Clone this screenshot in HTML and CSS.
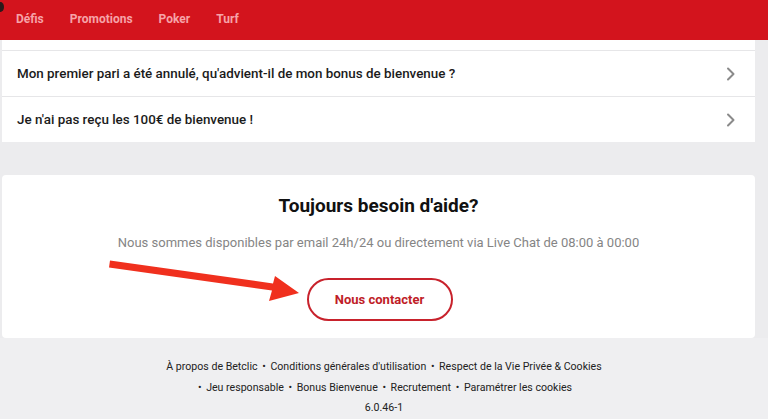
FILE: index.html
```html
<!DOCTYPE html>
<html lang="fr">
<head>
<meta charset="utf-8">
<title>Betclic aide</title>
<link rel="stylesheet" href="styles.css">
</head>
<body>
<header class="topbar">
  <span class="cursor-dot"></span>
  <nav class="nav">
    <a class="nav-item">Défis</a>
    <a class="nav-item">Promotions</a>
    <a class="nav-item">Poker</a>
    <a class="nav-item">Turf</a>
  </nav>
</header>
<main class="content">
  <section class="faq">
    <div class="faq-top"></div>
    <div class="faq-row">
      <span class="faq-text">Mon premier pari a été annulé, qu'advient-il de mon bonus de bienvenue ?</span>
      <svg class="chev" width="10" height="14" viewBox="0 0 10 14"><path d="M2 1.5 L7.5 7 L2 12.5" fill="none" stroke="#8a8a8a" stroke-width="2" stroke-linecap="round" stroke-linejoin="round"/></svg>
    </div>
    <div class="faq-row">
      <span class="faq-text">Je n'ai pas reçu les 100€ de bienvenue !</span>
      <svg class="chev" width="10" height="14" viewBox="0 0 10 14"><path d="M2 1.5 L7.5 7 L2 12.5" fill="none" stroke="#8a8a8a" stroke-width="2" stroke-linecap="round" stroke-linejoin="round"/></svg>
    </div>
  </section>
  <section class="help">
    <h2 class="help-title">Toujours besoin d'aide?</h2>
    <p class="help-sub">Nous sommes disponibles par email 24h/24 ou directement via Live Chat de 08:00 à 00:00</p>
    <div class="help-action">
      <a class="btn-contact">Nous contacter</a>
    </div>
    <svg class="arrow" width="200" height="48" viewBox="0 0 200 48"><path d="M1 7.5 L164 30.5 L161 41 L191 33 L167 16 L165 23.5 L2 0.5 Z" fill="#f0301e"/></svg>
  </section>
</main>
<footer class="footer">
  <p class="foot-line">À propos de Betclic <span class="dot">•</span> Conditions générales d'utilisation <span class="dot">•</span> Respect de la Vie Privée &amp; Cookies</p>
  <p class="foot-line"><span class="dot">•</span> Jeu responsable <span class="dot">•</span> Bonus Bienvenue <span class="dot">•</span> Recrutement <span class="dot">•</span> Paramétrer les cookies</p>
  <p class="foot-line">6.0.46-1</p>
</footer>
</body>
</html>
```
FILE: styles.css
```css
* { box-sizing: border-box; }
html, body { margin: 0; padding: 0; }
body {
  width: 768px;
  height: 419px;
  overflow: hidden;
  background: #ececee;
  font-family: Roboto, "Liberation Sans", Arial, sans-serif;
  color: #1a1a1a;
}
.topbar {
  position: relative;
  height: 40px;
  background: #d3141d;
  display: flex;
  align-items: center;
  padding-left: 16px;
}
.cursor-dot {
  position: absolute;
  left: -3px;
  top: 2px;
  width: 7px;
  height: 10px;
  border-radius: 50%;
  background: #2a1a1a;
}
.nav { display: flex; gap: 26px; padding-bottom: 3px; }
.nav-item {
  color: #f6a3a8;
  font-size: 12px;
  font-weight: 700;
  text-decoration: none;
}
.content { padding: 0 13px 0 2px; }
.faq { background: #fff; }
.faq-top { height: 10px; }
.faq-row {
  height: 46px;
  border-top: 1px solid #e6e6e8;
  display: flex;
  align-items: center;
  justify-content: space-between;
  padding: 0 19px 0 15px;
}
.faq-text { font-size: 13.4px; font-weight: 500; color: #1b1b1b; }
.chev { display: block; }
.help {
  position: relative;
  margin-top: 33px;
  background: #fff;
  border-radius: 4px;
  height: 163px;
  text-align: center;
  padding-top: 19px;
}
.help-title {
  margin: 0;
  font-size: 19px;
  font-weight: 700;
  color: #111;
  line-height: 24px;
}
.help-sub {
  margin: 16px 0 0;
  font-size: 13px;
  color: #858585;
  line-height: 18px;
}
.help-action { margin-top: 26px; display: flex; justify-content: center; }
.btn-contact {
  display: flex;
  align-items: center;
  justify-content: center;
  width: 146px;
  height: 43px;
  border: 2px solid #c8222c;
  border-radius: 22px;
  color: #c01d27;
  font-size: 13px;
  font-weight: 700;
  text-decoration: none;
  margin-left: 2px;
}
.arrow {
  position: absolute;
  left: 106px;
  top: 85px;
}
.footer {
  padding-top: 19px;
  text-align: center;
  background: #efeff1;
}
.foot-line {
  margin: 0;
  font-size: 10.6px;
  font-weight: 400;
  line-height: 20.5px;
  color: #222;
}
.dot { margin: 0 2px; }
```
